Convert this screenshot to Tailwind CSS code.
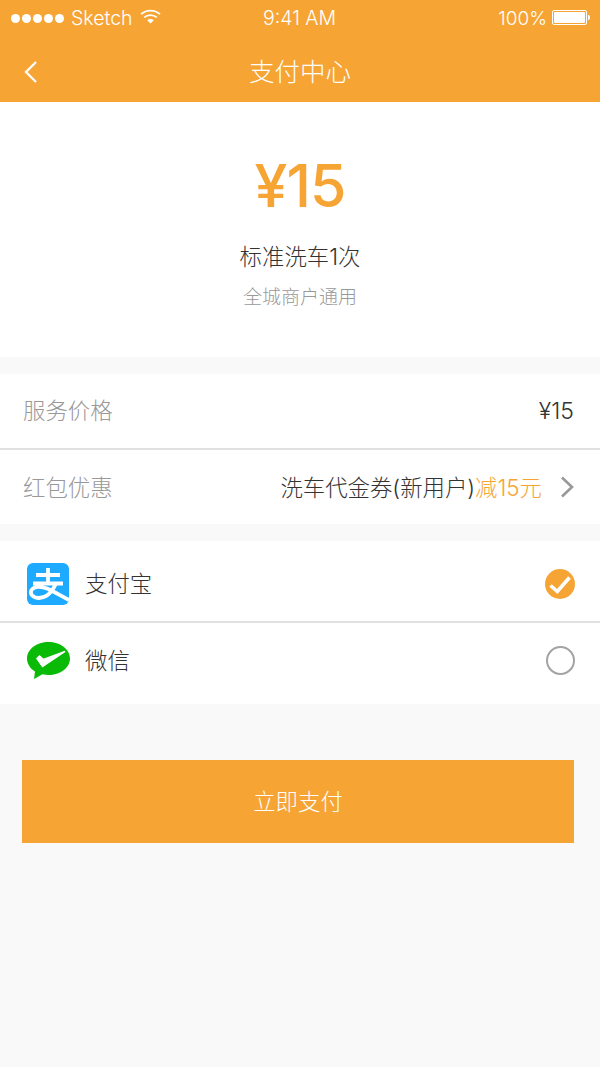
<!DOCTYPE html>
<html lang="zh-CN">
<head>
    <meta charset="UTF-8">
    <meta name="viewport" content="width=device-width, initial-scale=1.0">
    <title>支付中心</title>
    <script src="https://cdn.jsdelivr.net/npm/@tailwindcss/browser@4"></script>
</head>
<body class="bg-[#f9f9f9] min-h-screen font-['Inter','Noto_Sans_CJK_SC',sans-serif] font-light">
    <div class="w-[600px] h-[1067px] flex flex-col">
        <!-- Status + nav -->
        <header class="bg-[#f6a535] h-[102px] text-white shrink-0">
            <div class="h-[37px] pl-[11px] pr-[10px] flex items-center justify-between relative text-[19.5px] leading-none">
                <div class="flex items-center">
                    <div class="flex gap-[2px]">
                        <span class="w-[9px] h-[9px] rounded-full bg-white"></span>
                        <span class="w-[9px] h-[9px] rounded-full bg-white"></span>
                        <span class="w-[9px] h-[9px] rounded-full bg-white"></span>
                        <span class="w-[9px] h-[9px] rounded-full bg-white"></span>
                        <span class="w-[9px] h-[9px] rounded-full bg-white"></span>
                    </div>
                    <span class="ml-[7px]">Sketch</span>
                    <svg class="ml-[7px] -mt-[5px]" width="21" height="15" viewBox="0 0 21 15" fill="none">
                        <path d="M1 5.2C6.4 .4 14.600 .4 20 5.2" stroke="#fff" stroke-width="1.8"/>
                        <path d="M4.200 8.400C7.800 5.300 13.200 5.300 16.800 8.400" stroke="#fff" stroke-width="1.8"/>
                        <path d="M7.200 11.200C9.100 9.700 11.900 9.700 13.800 11.200L10.500 14.600Z" fill="#fff"/>
                    </svg>
                </div>
                <span class="absolute left-[263px]">9:41 AM</span>
                <div class="flex items-center">
                    <span class="text-[19px]">100%</span>
                    <div class="ml-[5px] w-[35px] h-[15px] border border-white rounded-[2px] p-[1px] -mt-[2px]">
                        <div class="w-full h-full bg-white rounded-[1px]"></div>
                    </div>
                    <div class="w-[2px] h-[5px] bg-white ml-[1px] rounded-r-sm -mt-[2px]"></div>
                </div>
            </div>
            <div class="h-[65px] relative flex items-center justify-center">
                <svg class="absolute left-[23px] top-[23px]" width="15" height="24" viewBox="0 0 15 24" fill="none">
                    <path d="M13 2L3 12L13 22" stroke="#fff" stroke-width="2.300"/>
                </svg>
                <h1 class="text-[25.5px] font-light leading-none mt-[4px]">支付中心</h1>
            </div>
        </header>

        <!-- Summary -->
        <section class="bg-white h-[255px] shrink-0 flex flex-col items-center">
            <div class="mt-[51px] text-[59px] leading-[66px] font-medium text-[#f6a535] tracking-[-1px]">¥15</div>
            <div class="mt-[23px] text-[22.4px] leading-[30px] text-[#333]">标准洗车1次</div>
            <div class="mt-[14px] text-[19px] leading-[24px] text-[#999]">全城商户通用</div>
        </section>

        <!-- Price rows -->
        <section class="mt-[17px] bg-white shrink-0">
            <div class="h-[76px] pl-[23px] pr-[26px] flex items-center justify-between border-b-2 border-[#e0e0e0]">
                <span class="text-[22.4px] text-[#999]">服务价格</span>
                <span class="text-[23px] text-[#333]">¥15</span>
            </div>
            <div class="h-[74px] px-[23px] pt-[1px] flex items-center justify-between">
                <span class="text-[22.4px] text-[#999]">红包优惠</span>
                <div class="flex items-center">
                    <span class="text-[22.4px] text-[#333]">洗车代金券(新用户)<span class="text-[#f6a535]">减15元</span></span>
                    <svg class="ml-[18px] mr-[2px]" width="15" height="22" viewBox="0 0 15 22" fill="none">
                        <path d="M2 1.500L12 11L2 20.500" stroke="#999" stroke-width="2.600"/>
                    </svg>
                </div>
            </div>
        </section>

        <!-- Payment methods -->
        <section class="mt-[17px] bg-white shrink-0">
            <div class="h-[82px] pl-[27px] pr-[25px] pt-[6px] flex items-center border-b-2 border-[#e0e0e0]">
                <svg width="42" height="42" viewBox="0 0 42 42" fill="none">
                    <rect width="42" height="42" rx="6" fill="#1eaaff"/>
                    <path d="M9 12H33M21 5V20M6 20.500H36M29 20.500C25 29 19 35 12 35C6 35 2.500 31 4.500 27C7 23 14 23 20 25.500C27 28.500 34 33 42 37" stroke="#fff" stroke-width="3.800"/>
                </svg>
                <span class="ml-[16px] text-[22.4px] text-[#333]">支付宝</span>
                <svg class="ml-auto" width="30" height="30" viewBox="0 0 30 30" fill="none">
                    <circle cx="15" cy="15" r="15" fill="#f6a535"/>
                    <path d="M5.500 16.500L12.300 22.500L24.500 8.500" stroke="#fff" stroke-width="3.600"/>
                </svg>
            </div>
            <div class="h-[81px] pl-[27px] pr-[25px] pb-[6px] flex items-center">
                <svg class="mt-[1px]" width="44" height="40" viewBox="0 0 44 40" fill="none">
                    <path d="M21.500 1C33.400 1 43 8.400 43 17.500C43 26.600 33.400 34 21.500 34C19.500 34 17.500 33.800 15.500 33.300L7 38L8 30.500C3 27.500 0 22.700 0 17.500C0 8.400 9.600 1 21.500 1Z" fill="#09bb07"/>
                    <path d="M10 17.500L15.500 25.500L38 10.500L16.500 18.500L12.500 15Z" fill="#fff" stroke="#fff" stroke-width="1.500"/>
                </svg>
                <span class="ml-[14px] text-[22.4px] text-[#333]">微信</span>
                <span class="ml-auto w-[29px] h-[29px] rounded-full border-2 border-[#a3a3a3]"></span>
            </div>
        </section>

        <!-- Pay button -->
        <div class="mt-[56px] ml-[22px] w-[552px] h-[83px] bg-[#f6a535] flex items-center justify-center text-white text-[22.4px] shrink-0">立即支付</div>
    </div>
</body>
</html>
